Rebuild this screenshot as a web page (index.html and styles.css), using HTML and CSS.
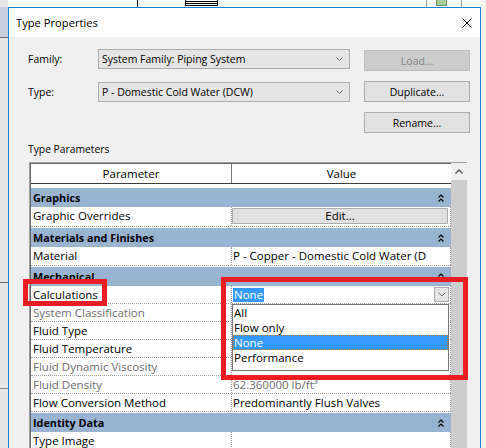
FILE: index.html
```html
<!DOCTYPE html>
<html>
<head>
<meta charset="utf-8">
<title>Type Properties</title>
<link rel="stylesheet" href="styles.css">
</head>
<body>
<div class="screen">
  <div class="bg bg-left"></div>
  <div class="bg bg-left-top"></div>
  <div class="bg bg-left-line1"></div>
  <div class="bg bg-left-line2"></div>
  <div class="bg bg-left-line3"></div>
  <div class="bg bg-line-a"></div>
  <div class="bg bg-box-a"></div>
  <div class="bg bg-line-b"></div>
  <div class="bg bg-box-green"></div>
  <div class="bg bg-line-c"></div>
  <div class="bg bg-right"></div>

  <div class="dialog">
    <div class="titlebar">
      <span class="title">Type Properties</span>
      <svg class="close" width="10" height="10" viewBox="0 0 10 10"><path d="M0.5 0.5 L9.5 9.5 M9.5 0.5 L0.5 9.5" stroke="#000" stroke-width="1" fill="none"/></svg>
    </div>
    <div class="body">
      <div class="top">
        <div class="fields">
          <div class="field">
            <span class="label">Family:</span>
            <div class="select"><span>System Family: Piping System</span><svg width="7" height="4" viewBox="0 0 7 4"><path d="M0.5 0.5 L3.5 3.5 L6.5 0.5" fill="none" stroke="#606060"/></svg></div>
          </div>
          <div class="field">
            <span class="label">Type:</span>
            <div class="select"><span>P - Domestic Cold Water (DCW)</span><svg width="7" height="4" viewBox="0 0 7 4"><path d="M0.5 0.5 L3.5 3.5 L6.5 0.5" fill="none" stroke="#606060"/></svg></div>
          </div>
        </div>
        <div class="buttons">
          <div class="btn disabled">Load...</div>
          <div class="btn">Duplicate...</div>
          <div class="btn">Rename...</div>
        </div>
      </div>

      <div class="section-label">Type Parameters</div>

      <div class="table">
        <div class="grid">
          <div class="thead">
            <div class="th th-param">Parameter</div>
            <div class="th th-value">Value</div>
          </div>
          <div class="tbody">
            <div class="group first"><span>Graphics</span><svg width="6" height="8" viewBox="0 0 6 8"><path d="M0.5 3.5 L3 1 L5.5 3.5 M0.5 7.5 L3 5 L5.5 7.5" fill="none" stroke="#000" stroke-width="1.2"/></svg></div>
            <div class="row tall">
              <div class="pcell">Graphic Overrides</div>
              <div class="vcell nopad"><div class="edit-btn">Edit...</div></div>
            </div>
            <div class="group"><span>Materials and Finishes</span><svg width="6" height="8" viewBox="0 0 6 8"><path d="M0.5 3.5 L3 1 L5.5 3.5 M0.5 7.5 L3 5 L5.5 7.5" fill="none" stroke="#000" stroke-width="1.2"/></svg></div>
            <div class="row mid">
              <div class="pcell">Material</div>
              <div class="vcell">P - Copper - Domestic Cold Water (D</div>
            </div>
            <div class="group"><span>Mechanical</span><svg width="6" height="8" viewBox="0 0 6 8"><path d="M0.5 3.5 L3 1 L5.5 3.5 M0.5 7.5 L3 5 L5.5 7.5" fill="none" stroke="#000" stroke-width="1.2"/></svg></div>
            <div class="row">
              <div class="pcell">Calculations</div>
              <div class="vcell open">
                <div class="combo">
                  <span class="sel">None</span>
                  <span class="combo-btn"><svg width="8" height="5" viewBox="0 0 8 5"><path d="M0.5 0.5 L4 4 L7.5 0.5" fill="none" stroke="#707070"/></svg></span>
                </div>
                <div class="dropdown">
                  <div class="opt">All</div>
                  <div class="opt">Flow only</div>
                  <div class="opt active">None</div>
                  <div class="opt">Performance</div>
                </div>
              </div>
            </div>
            <div class="row">
              <div class="pcell muted">System Classification</div>
              <div class="vcell"></div>
            </div>
            <div class="row">
              <div class="pcell">Fluid Type</div>
              <div class="vcell"></div>
            </div>
            <div class="row">
              <div class="pcell">Fluid Temperature</div>
              <div class="vcell"></div>
            </div>
            <div class="row">
              <div class="pcell muted">Fluid Dynamic Viscosity</div>
              <div class="vcell"></div>
            </div>
            <div class="row">
              <div class="pcell muted">Fluid Density</div>
              <div class="vcell muted">62.360000 lb/ft³</div>
            </div>
            <div class="row">
              <div class="pcell">Flow Conversion Method</div>
              <div class="vcell">Predominantly Flush Valves</div>
            </div>
            <div class="group"><span>Identity Data</span><svg width="6" height="8" viewBox="0 0 6 8"><path d="M0.5 3.5 L3 1 L5.5 3.5 M0.5 7.5 L3 5 L5.5 7.5" fill="none" stroke="#000" stroke-width="1.2"/></svg></div>
            <div class="row">
              <div class="pcell">Type Image</div>
              <div class="vcell"></div>
            </div>
          </div>
        </div>
        <div class="scrollbar">
          <div class="sb-up"><svg width="8" height="5" viewBox="0 0 8 5"><path d="M0.5 4.5 L4 1 L7.5 4.5" fill="none" stroke="#505050" stroke-width="1.3"/></svg></div>
          <div class="sb-thumb"></div>
        </div>
      </div>
    </div>
  </div>

  <div class="annot annot-calc"></div>
  <div class="annot annot-drop"></div>
</div>
</body>
</html>
```

FILE: styles.css
```css
* { box-sizing: border-box; }
html, body { margin: 0; padding: 0; }
body {
  font-family: "Open Sans", "Noto Sans", sans-serif;
  font-size: 11.5px;
  color: #000;
  background: #fff;
}
.screen {
  position: relative;
  width: 486px;
  height: 448px;
  overflow: hidden;
  background: #fff;
  padding: 7px 0 0 8px;
}

/* backdrop (application behind the dialog) */
.bg { position: absolute; }
.bg-left { left: 0; top: 0; width: 8px; height: 448px; background: #e6e6e6; }
.bg-left-top { left: 0; top: 7px; width: 8px; height: 30px; background: #c6cfdb; }
.bg-left-line1 { left: 0; top: 37px; width: 8px; height: 1px; background: #6a6a6a; }
.bg-left-line2 { left: 0; top: 282px; width: 8px; height: 1px; background: #6a6a6a; }
.bg-left-line3 { left: 0; top: 388px; width: 8px; height: 1px; background: #8a8a8a; }
.bg-line-a { left: 137px; top: 0; width: 1px; height: 7px; background: #000; }
.bg-box-a { left: 185px; top: 0; width: 33px; height: 6px; border: 1px solid #000; border-top: none;
  background: repeating-linear-gradient(#fff 0 1px, #000 1px 2px); }
.bg-line-b { left: 426px; top: 0; width: 1px; height: 7px; background: #9a9a9a; }
.bg-box-green { left: 436px; top: 0; width: 11px; height: 6px; background: #a9cf9a; border: 1px solid #6f9a5f; border-top: none; }
.bg-line-c { left: 461px; top: 0; width: 1px; height: 7px; background: #9a9a9a; }
.bg-right { left: 481px; top: 0; width: 5px; height: 448px; background: #f3f3f3; }

/* dialog */
.dialog {
  width: 473px;
  height: 441px;
  border: 1px solid #1b7fd6;
  border-bottom: none;
  background: #f0f0f0;
  display: flex;
  flex-direction: column;
}
.titlebar {
  height: 29px;
  flex: none;
  background: #fff;
  display: flex;
  align-items: center;
  justify-content: space-between;
  padding: 0 8px 0 7px;
}
.title { font-size: 11.2px; line-height: 16px; }
.close { display: block; }

.body { flex: 1; padding-left: 19px; overflow: hidden; }
.top { display: flex; font-size: 10.5px; }
.fields { display: flex; flex-direction: column; gap: 13px; padding-top: 12px; }
.field { display: flex; align-items: center; height: 20px; }
.label { width: 70px; }
.select {
  width: 252px;
  height: 20px;
  border: 1px solid #acacac;
  background: #e5e5e5;
  display: flex;
  align-items: center;
  justify-content: space-between;
  padding: 0 6px 0 3px;
  white-space: nowrap;
}
.buttons { display: flex; flex-direction: column; gap: 10px; padding-top: 13px; margin-left: 14px; }
.btn {
  width: 106px;
  height: 21px;
  border: 1px solid #adadad;
  background: #e1e1e1;
  display: flex;
  align-items: center;
  justify-content: center;
}
.btn.disabled { background: #cccccc; border-color: #bfbfbf; color: #838383; }

.section-label { margin-top: 8px; height: 16px; line-height: 16px; margin-bottom: 5px; font-size: 10.3px; }

/* property grid */
.table {
  margin-left: 1px;
  width: 438px;
  height: 300px;
  display: flex;
  border-top: 1px solid #a0a0a0;
  border-left: 1px solid #a0a0a0;
}
.grid {
  width: 421px;
  border-left: 1px solid #696969;
  border-top: 1px solid #696969;
  background: #fff;
}
.thead { display: flex; height: 20px; border-bottom: 1px solid #3c3c3c; }
.th { text-align: center; line-height: 19px; }
.th-param { width: 201px; border-right: 1px solid #7a7a7a; }
.th-value { flex: 1; }

.tbody { padding-top: 3px; }
.group {
  height: 20px;
  border-top: 1px solid #fff;
  background: #99b4d1;
  font-weight: bold;
  font-size: 10.8px;
  display: flex;
  align-items: center;
  justify-content: space-between;
  padding: 0 7px 0 2px;
}
.row { display: flex; height: 18px; border-bottom: 1px dotted #a0a0a0; }
.row.tall { height: 20px; }
.row.mid { height: 19px; }
.pcell {
  width: 201px;
  border-right: 1px dotted #a0a0a0;
  padding-left: 2px;
  line-height: 17px;
  white-space: nowrap;
  overflow: hidden;
}
.vcell {
  width: 219px;
  border-right: 1px dotted #a0a0a0;
  padding-left: 1px;
  line-height: 17px;
  white-space: nowrap;
  overflow: hidden;
  position: relative;
}
.vcell.nopad { padding-left: 0; }
.vcell.open { overflow: visible; }
.muted { color: #6d6d6d; }

.edit-btn {
  margin-top: 1px;
  width: 216px;
  height: 16px;
  background: #e1e1e1;
  border: 1px solid #adadad;
  text-align: center;
  line-height: 14px;
}

.combo { display: flex; justify-content: space-between; align-items: flex-start; padding-right: 1px; }
.sel {
  margin-top: 2px;
  background: #3399ff;
  color: #fff;
  padding: 0 1px;
  line-height: 14px;
}
.combo-btn {
  margin-top: 1px;
  width: 15px;
  height: 15px;
  background: #e5e5e5;
  border: 1px solid #acacac;
  display: flex;
  align-items: center;
  justify-content: center;
}
.dropdown {
  position: absolute;
  left: 0;
  top: 18px;
  width: 217px;
  border: 1px solid #7a7a7a;
  background: #fff;
  padding-bottom: 5px;
  z-index: 2;
}
.opt { height: 15px; line-height: 15px; padding-left: 1px; }
.opt.active {
  background: #3399ff;
  color: #fff;
  outline: 1px dotted #c0782e;
  outline-offset: -1px;
}

.scrollbar { width: 16px; background: #cdcdcd; display: flex; flex-direction: column; }
.sb-up { height: 17px; background: #f0f0f0; display: flex; align-items: center; justify-content: center; }
.sb-thumb { flex: 1; }

/* red annotation boxes drawn over the screenshot */
.annot { position: absolute; border: 5px solid #ed1c24; z-index: 5; }
.annot-calc { left: 23px; top: 279px; width: 84px; height: 27px; }
.annot-drop { left: 221px; top: 277px; width: 247px; height: 103px; }
```
